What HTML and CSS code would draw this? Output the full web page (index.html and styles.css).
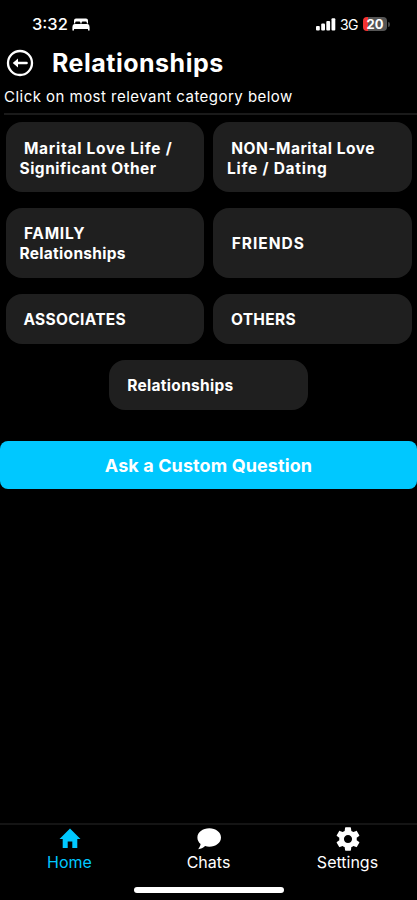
FILE: index.html
```html
<!DOCTYPE html>
<html lang="en">

<head>
  <meta charset="UTF-8">
  <meta name="viewport" content="width=device-width, initial-scale=1.0">
  <title>Relationships</title>
  <link rel="stylesheet" href="styles.css">
</head>

<body>
  <div class="app">
    <div class="status">
      <div class="status-left">
        <span class="time">3:32</span>
        <svg class="bed" width="18" height="13" viewBox="0 0 18 13" fill="#fff">
          <path d="M2 5.5V2.5Q2 .5 4 .5H14Q16 .5 16 2.5V5.5H14.8V4.6Q14.8 3.4 13.6 3.4H10.8Q9.6 3.4 9.6 4.6V5.5H8.4V4.6Q8.4 3.4 7.2 3.4H4.4Q3.2 3.4 3.2 4.6V5.5Z" />
          <path d="M2.6 6.1H15.4Q17.6 6.3 17.6 9V12.6H16V11H2V12.6H.4V9Q.4 6.3 2.6 6.1Z" />
        </svg>
      </div>
      <div class="status-right">
        <svg width="20" height="13" viewBox="0 0 20 13" fill="#fff">
          <rect x="0" y="8" width="3.8" height="4.5" rx="1" />
          <rect x="5.2" y="5.6" width="3.8" height="6.9" rx="1" />
          <rect x="10.3" y="3" width="3.8" height="9.5" rx="1" />
          <rect x="15.5" y=".3" width="3.8" height="12.2" rx="1" />
        </svg>
        <span class="network">3G</span>
        <span class="battery">20</span>
        <span class="battery-tip"></span>
      </div>
    </div>

    <header class="header">
      <svg width="28" height="28" viewBox="0 0 28 28" fill="none" stroke="#fff" stroke-width="2.3">
        <circle cx="14" cy="14" r="12" />
        <path d="M9 14H20.5" stroke-width="2.6" stroke-linecap="round" />
        <path d="M6.8 14L12 9.6V18.4Z" fill="#fff" stroke="none" />
      </svg>
      <h1>Relationships</h1>
    </header>
    <p class="subtitle">Click on most relevant category below</p>

    <main>
      <div class="categories">
        <button class="card"><span class="wide">&nbsp;Marital Love Life /</span><br><span class="medium">Significant Other</span></button>
        <button class="card"><span class="medium">&nbsp;NON-Marital Love</span><br><span class="wide">Life / Dating</span></button>
        <button class="card"><span class="wide">&nbsp;FAMILY</span><br><span>Relationships</span></button>
        <button class="card"><span class="extra-wide">&nbsp;FRIENDS</span></button>
        <button class="card"><span>&nbsp;ASSOCIATES</span></button>
        <button class="card"><span>&nbsp;OTHERS</span></button>
        <button class="card"><span>&nbsp;Relationships</span></button>
      </div>
      <button class="ask">Ask a Custom Question</button>
    </main>

    <nav class="tabs">
      <a class="tab active">
        <svg width="24" height="24" viewBox="0 0 24 24" fill="currentColor">
          <path d="M9.7 21v-6.500h4.600V21h5v-9h3.200L12 1.600 1.500 12h3.200v9z" />
        </svg>
        <span>Home</span>
      </a>
      <a class="tab">
        <svg width="24" height="24" viewBox="0 0 24 24" fill="currentColor">
          <path d="M12.3 1.300C18.800 1.300 24 5.300 24 10.500S18.800 19.700 12.300 19.700C10.800 19.700 9.400 19.500 8.100 19.100C6.200 20.900 3.900 22.200 1.200 22.200C2.300 20.900 3.300 19 3.600 17C1.600 15.300.4 13.200.4 10.500C.4 5.300 5.800 1.300 12.300 1.300Z" />
        </svg>
        <span>Chats</span>
      </a>
      <a class="tab">
        <svg class="gear" width="28" height="28" viewBox="0 0 24 24" fill="currentColor">
          <path d="M19.430 12.980c.04-.32.07-.64.07-.98s-.03-.66-.07-.98l2.110-1.650c.19-.15.24-.42.12-.64l-2-3.460c-.12-.22-.39-.3-.61-.22l-2.490 1c-.52-.4-1.080-.73-1.690-.98l-.38-2.650C14.460 2.180 14.250 2 14 2h-4c-.25 0-.46.18-.49.42l-.38 2.650c-.61.25-1.170.59-1.690.98l-2.490-1c-.23-.09-.49 0-.61.22l-2 3.460c-.13.22-.07.49.12.64l2.110 1.650c-.04.32-.07.65-.07.98s.03.66.07.98l-2.110 1.650c-.19.15-.24.42-.12.64l2 3.460c.12.22.39.3.61.22l2.490-1c.52.4 1.080.73 1.690.98l.38 2.650c.03.24.24.42.49.42h4c.25 0 .46-.18.49-.42l.38-2.650c.61-.25 1.170-.59 1.690-.98l2.490 1c.23.09.49 0 .61-.22l2-3.460c.12-.22.07-.49-.12-.64l-2.110-1.650zM12 15.500c-1.930 0-3.500-1.570-3.500-3.500s1.570-3.500 3.500-3.500 3.500 1.570 3.500 3.500-1.570 3.500-3.500 3.500z" />
        </svg>
        <span>Settings</span>
      </a>
    </nav>
    <div class="home-indicator"></div>
  </div>
</body>

</html>
```

FILE: styles.css
```css
* {
  box-sizing: border-box;
}

body {
  margin: 0;
  background-color: #000;
  color: #fff;
  font-family: Inter, "Liberation Sans", sans-serif;
}

.app {
  height: 900px;
  display: flex;
  flex-direction: column;
  overflow: hidden;
}

.status {
  height: 48px;
  padding: 0 27px 0 32px;
  display: flex;
  align-items: center;
  justify-content: space-between;
}

.status-left,
.status-right {
  display: flex;
  align-items: center;
}

.time {
  font-size: 16.5px;
  font-weight: 500;
  margin-right: 4px;
}

.network {
  font-size: 14px;
  letter-spacing: -0.5px;
  margin: 0 5px 0 4px;
}

.battery {
  width: 24px;
  height: 14px;
  border-radius: 4px;
  background: linear-gradient(to right, #f53232 5px, #555 5px);
  font-size: 13px;
  font-weight: 700;
  line-height: 14px;
  text-align: center;
}

.battery-tip {
  width: 2px;
  height: 5px;
  margin-left: 1px;
  border-radius: 0 2px 2px 0;
  background-color: #444;
}

.header {
  height: 30px;
  padding-left: 6px;
  display: flex;
  align-items: center;
  gap: 18px;
}

h1 {
  margin: 0;
  font-size: 25px;
  font-weight: 700;
  letter-spacing: 0.5px;
}

.subtitle {
  margin: 0 0 0 4px;
  height: 37px;
  line-height: 37px;
  font-size: 15px;
  letter-spacing: 0.47px;
  border-bottom: 2px solid #1a1a1a;
}

.categories {
  display: flex;
  flex-wrap: wrap;
  justify-content: center;
  gap: 16px 9px;
  padding: 7px 5px 0 5px;
}

.card {
  width: 198.5px;
  height: 70px;
  padding: 2px 0 0 14px;
  border: 0;
  border-radius: 16px;
  background-color: #1f1f1f;
  color: #fff;
  font-family: inherit;
  font-size: 15.5px;
  font-weight: 700;
  line-height: 20px;
  letter-spacing: 0.3px;
  text-align: left;
}

.card:nth-child(-n+2) {
  padding-top: 3px;
}

.card:nth-child(n+5) {
  height: 50px;
}

.medium {
  letter-spacing: 0.5px;
}

.wide {
  letter-spacing: 0.75px;
}

.extra-wide {
  letter-spacing: 1px;
}

.ask {
  width: 100%;
  height: 48px;
  margin-top: 31px;
  border: 0;
  border-radius: 8px;
  background-color: #00c8ff;
  color: #fff;
  font-family: inherit;
  font-size: 18px;
  font-weight: 700;
  letter-spacing: 0.1px;
}

.tabs {
  margin-top: auto;
  height: 64px;
  border-top: 2px solid #141414;
  display: flex;
}

.tab {
  flex: 1;
  display: flex;
  flex-direction: column;
  align-items: center;
  padding-top: 2px;
  font-size: 16px;
  line-height: 23px;
}

.gear {
  margin: -2px 0;
}

.active {
  color: #00c8ff;
}

.home-indicator {
  width: 150px;
  height: 6px;
  margin: 0 auto 7px;
  border-radius: 3px;
  background-color: #fff;
}
```
